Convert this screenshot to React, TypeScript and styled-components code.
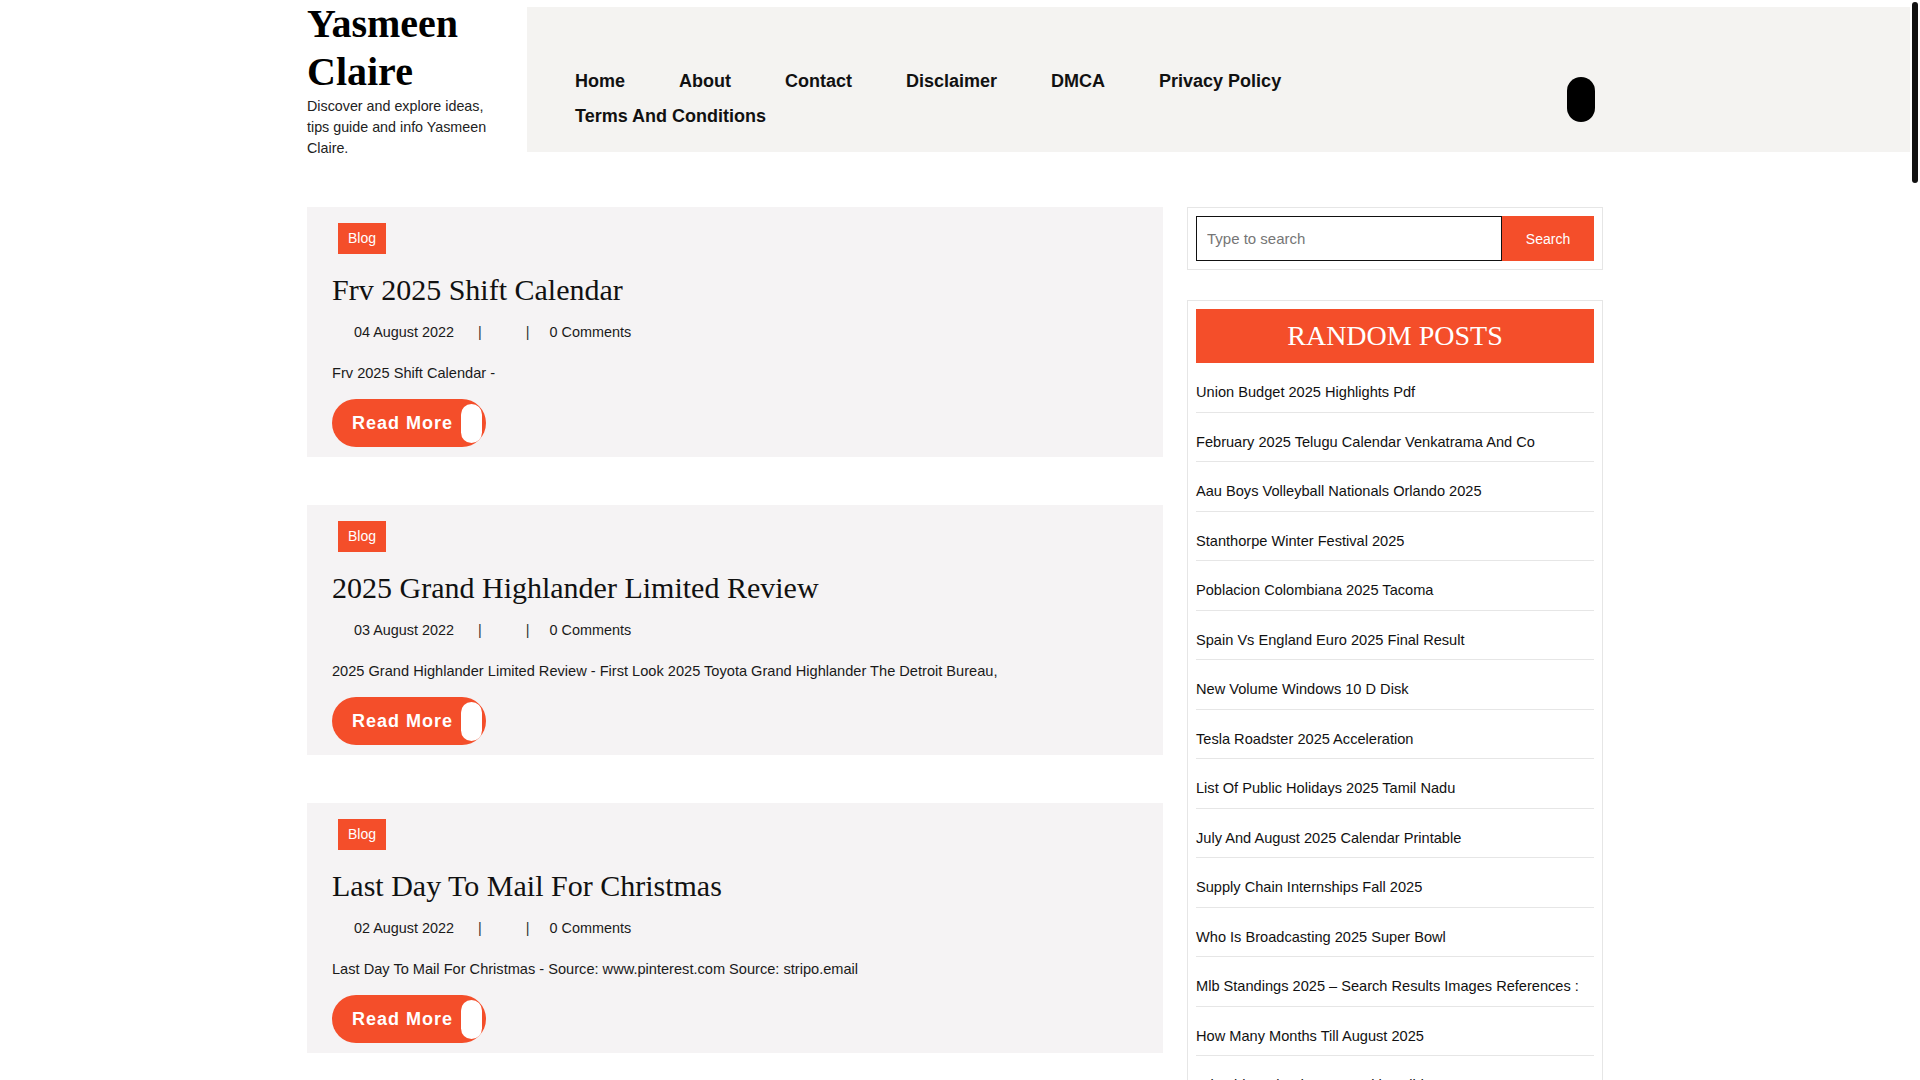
import React from "react";
import styled, { createGlobalStyle } from "styled-components";

const ORANGE = "#f44e2a";
const SERIF = '"Liberation Serif", "Times New Roman", serif';
const SANS = '"Liberation Sans", Arial, sans-serif';

const GlobalStyle = createGlobalStyle`
  html, body { margin: 0; padding: 0; background: #fff; }
  body { font-family: ${SANS}; color: #111; }
  *, *::before, *::after { box-sizing: border-box; }
`;

const Shell = styled.div`
  display: flex;
  align-items: flex-start;
`;

const Page = styled.div`
  flex: 1;
  min-width: 0;
`;

const ScrollRail = styled.div`
  flex: none;
  width: 10px;
  height: 100vh;
  position: sticky;
  top: 0;
  padding: 2px;
  background: #fff;
`;

const ScrollThumb = styled.div`
  height: 181px;
  border-radius: 3px;
  background: #111;
`;

const Header = styled.header`
  display: flex;
  align-items: flex-start;
  padding-left: calc((100% - 1296px) / 2);
`;

const Brand = styled.div`
  width: 220px;
  flex: none;
  padding-right: 25px;
`;

const SiteTitle = styled.h1`
  margin: 0;
  font-family: ${SERIF};
  font-size: 40px;
  line-height: 47.5px;
  font-weight: 700;
  color: #000;
`;

const Tagline = styled.p`
  margin: 1px 0 0;
  font-size: 14.3px;
  line-height: 21px;
  color: #222;
`;

const NavBox = styled.nav`
  flex: 1;
  margin-top: 7px;
  display: flex;
  align-items: center;
  background: #f4f3f1;
  padding: 57px calc(100% - 1288px) 18px 48px;
`;

const NavList = styled.ul`
  width: 900px;
  margin: 0;
  padding: 0;
  list-style: none;
  display: flex;
  flex-wrap: wrap;
`;

const NavItem = styled.li`
  margin-right: 54px;
  font-size: 18px;
  line-height: 35px;
  font-weight: 700;
  color: #111;
`;

const MenuToggle = styled.button`
  margin-left: auto;
  flex: none;
  width: 28px;
  height: 45px;
  border: 0;
  padding: 0;
  border-radius: 14px;
  background: #000;
`;

const Layout = styled.div`
  width: 1296px;
  margin: 48px auto 0;
  display: grid;
  grid-template-columns: 856px 416px;
  gap: 24px;
  align-items: start;
`;

const PostList = styled.main`
  display: flex;
  flex-direction: column;
  gap: 48px;
`;

const Card = styled.article`
  background: #f5f3f4;
  padding: 16px 25px 10px;
  display: flex;
  flex-direction: column;
  align-items: flex-start;
`;

const Badge = styled.span`
  margin-left: 6px;
  height: 31px;
  padding: 0 10px;
  background: ${ORANGE};
  color: #fff;
  font-size: 14px;
  line-height: 31px;
`;

const PostTitle = styled.h2`
  margin: 18px 0 0;
  font-family: ${SERIF};
  font-weight: 400;
  font-size: 30px;
  line-height: 36px;
  color: #111;
`;

const Meta = styled.div`
  margin-top: 14px;
  padding-left: 22px;
  display: flex;
  font-size: 14.4px;
  line-height: 21px;
  color: #1a1a1a;
`;

const MetaSep = styled.span`
  margin: 0 20px 0 24px;
  color: #333;
`;

const Excerpt = styled.p`
  margin: 20px 0 0;
  font-size: 14.6px;
  line-height: 21px;
  color: #1a1a1a;
`;

const ReadMore = styled.a`
  margin-top: 15px;
  height: 48px;
  display: inline-flex;
  align-items: center;
  gap: 8px;
  padding: 0 4px 0 20px;
  border-radius: 24px;
  background: ${ORANGE};
  color: #fff;
  font-size: 18px;
  font-weight: 700;
  letter-spacing: 1px;
  text-decoration: none;
`;

const ReadMoreKnob = styled.span`
  width: 21px;
  height: 39px;
  border-radius: 11px;
  background: #fff;
`;

const Sidebar = styled.aside`
  display: flex;
  flex-direction: column;
  gap: 30px;
`;

const Widget = styled.section`
  border: 1px solid #e6e6e6;
  padding: 8px;
`;

const SearchForm = styled.form`
  display: flex;
  margin: 0;
`;

const SearchInput = styled.input`
  flex: 1;
  min-width: 0;
  height: 45px;
  border: 1px solid #111;
  padding: 0 10px;
  font-family: ${SANS};
  font-size: 15px;
  color: #111;
  background: #fff;
  outline: none;
  &::placeholder { color: #767676; }
`;

const SearchButton = styled.button`
  width: 92px;
  height: 45px;
  border: 0;
  background: ${ORANGE};
  color: #fff;
  font-family: ${SANS};
  font-size: 14px;
`;

const WidgetTitle = styled.h3`
  margin: 0;
  background: ${ORANGE};
  color: #fff;
  font-family: ${SERIF};
  font-weight: 400;
  font-size: 28px;
  line-height: 54px;
  text-align: center;
  text-transform: uppercase;
`;

const RandomList = styled.ul`
  margin: 0;
  padding: 0;
  list-style: none;
`;

const RandomItem = styled.li`
  padding: 18px 0 8px;
  border-bottom: 1px solid #e6e6e6;
  font-size: 14.6px;
  line-height: 22.5px;
  color: #111;
`;

const Footer = styled.footer`
  margin-top: 50px;
  height: 130px;
  background: #f4f3f1;
  display: flex;
  align-items: center;
  justify-content: center;
  font-size: 14px;
  color: #333;
`;

const navLinks = ["Home", "About", "Contact", "Disclaimer", "DMCA", "Privacy Policy", "Terms And Conditions"];

const randomPosts = [
  "Union Budget 2025 Highlights Pdf",
  "February 2025 Telugu Calendar Venkatrama And Co",
  "Aau Boys Volleyball Nationals Orlando 2025",
  "Stanthorpe Winter Festival 2025",
  "Poblacion Colombiana 2025 Tacoma",
  "Spain Vs England Euro 2025 Final Result",
  "New Volume Windows 10 D Disk",
  "Tesla Roadster 2025 Acceleration",
  "List Of Public Holidays 2025 Tamil Nadu",
  "July And August 2025 Calendar Printable",
  "Supply Chain Internships Fall 2025",
  "Who Is Broadcasting 2025 Super Bowl",
  "Mlb Standings 2025 – Search Results Images References :",
  "How Many Months Till August 2025",
  "Printable Calendar 2025 With Holidays",
];

type Post = { title: string; date: string; excerpt: string };

const posts: Post[] = [
  { title: "Frv 2025 Shift Calendar", date: "04 August 2022", excerpt: "Frv 2025 Shift Calendar -" },
  {
    title: "2025 Grand Highlander Limited Review",
    date: "03 August 2022",
    excerpt:
      "2025 Grand Highlander Limited Review - First Look 2025 Toyota Grand Highlander The Detroit Bureau,",
  },
  {
    title: "Last Day To Mail For Christmas",
    date: "02 August 2022",
    excerpt: "Last Day To Mail For Christmas - Source: www.pinterest.com Source: stripo.email",
  },
  {
    title: "Union Budget 2025 Highlights Pdf",
    date: "01 August 2022",
    excerpt: "Union Budget 2025 Highlights Pdf -",
  },
];

function PostCard({ post }: { post: Post }) {
  return (
    <Card>
      <Badge>Blog</Badge>
      <PostTitle>{post.title}</PostTitle>
      <Meta>
        <span>{post.date}</span>
        <MetaSep>|</MetaSep>
        <span />
        <MetaSep>|</MetaSep>
        <span>0 Comments</span>
      </Meta>
      <Excerpt>{post.excerpt}</Excerpt>
      <ReadMore href="#">
        Read More
        <ReadMoreKnob />
      </ReadMore>
    </Card>
  );
}

export default function App() {
  return (
    <Shell>
      <GlobalStyle />
      <Page>
        <Header>
          <Brand>
            <SiteTitle>Yasmeen Claire</SiteTitle>
            <Tagline>Discover and explore ideas, tips guide and info Yasmeen Claire.</Tagline>
          </Brand>
          <NavBox>
            <NavList>
              {navLinks.map((l) => (
                <NavItem key={l}>{l}</NavItem>
              ))}
            </NavList>
            <MenuToggle aria-label="menu" />
          </NavBox>
        </Header>
        <Layout>
          <PostList>
            {posts.map((p) => (
              <PostCard key={p.title} post={p} />
            ))}
          </PostList>
          <Sidebar>
            <Widget>
              <SearchForm onSubmit={(e) => e.preventDefault()}>
                <SearchInput placeholder="Type to search" />
                <SearchButton type="submit">Search</SearchButton>
              </SearchForm>
            </Widget>
            <Widget>
              <WidgetTitle>Random Posts</WidgetTitle>
              <RandomList>
                {randomPosts.map((t) => (
                  <RandomItem key={t}>{t}</RandomItem>
                ))}
              </RandomList>
            </Widget>
          </Sidebar>
        </Layout>
        <Footer>Copyright © 2025 Yasmeen Claire</Footer>
      </Page>
      <ScrollRail>
        <ScrollThumb />
      </ScrollRail>
    </Shell>
  );
}
